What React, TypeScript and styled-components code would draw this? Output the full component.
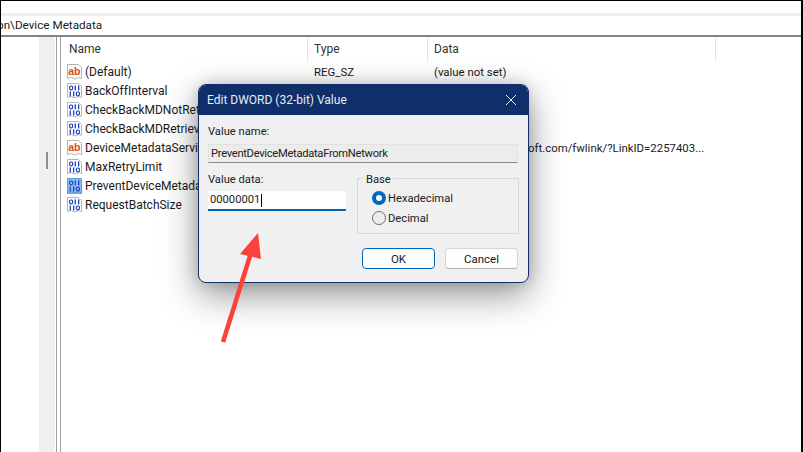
import React from 'react';
import styled, { createGlobalStyle } from 'styled-components';

const Global = createGlobalStyle`
  html, body { margin: 0; padding: 0; background: #fff; }
  * { box-sizing: border-box; }
  body { font-family: Roboto, "Noto Sans", sans-serif; }
`;

const Screen = styled.div`
  position: relative;
  width: 803px;
  height: 452px;
  overflow: hidden;
  background: #fff;
  border-top: 1px solid #000;
  border-left: 1px solid #000;
  border-right: 2px solid #000;
  display: flex;
  flex-direction: column;
  font-size: 12px;
  color: #1a1a1a;
`;
const MenuBar = styled.div`height: 12px; background: #fff;`;
const MenuEdge = styled.div`height: 3px; background: #f0f0f0;`;
const AddressBar = styled.div`
  height: 19px;
  line-height: 19px;
  font-size: 11.7px;
  white-space: nowrap;
  overflow: hidden;
  background: #fff;
`;
const AddressText = styled.span`margin-left: -4px; display: inline-block;`;
const Rule = styled.div`height: 2px; background: #838383;`;
const Body = styled.div`flex: 1; display: flex; min-height: 0;`;
const Tree = styled.div`width: 38px; background: #fff;`;
const TreeScroll = styled.div`
  width: 16px;
  background: #f0f0f0;
  display: flex;
  justify-content: center;
  padding-top: 115px;
`;
const Thumb = styled.div`width: 2px; height: 17px; background: #8f8f8f;`;
const Splitter = styled.div`
  width: 5px;
  margin-left: 1px;
  border-left: 1px solid #a0a0a0;
  border-right: 1px solid #a0a0a0;
  background: #fff;
`;
const List = styled.div`flex: 1; padding-left: 1px; min-width: 0;`;
const Header = styled.div`
  height: 25px;
  display: flex;
  align-items: stretch;
  color: #333;
`;
const HeaderCell = styled.div<{ $w: number; $pad: number }>`
  width: ${p => p.$w}px;
  padding-left: ${p => p.$pad}px;
  line-height: 24px;
  border-right: 1px solid #e5e5e5;
`;
const Row = styled.div`
  height: 19px;
  display: flex;
  align-items: center;
  white-space: nowrap;
`;
const NameCell = styled.div`
  width: 246px;
  display: flex;
  align-items: center;
  gap: 3px;
  padding-left: 5px;
  flex: none;
`;
const NameText = styled.span`
  display: block;
  max-width: 113px;
  overflow: hidden;
`;
const TypeCell = styled.div`width: 120px; padding-left: 6px; flex: none; font-size: 11.4px;`;
const DataCell = styled.div<{ $indent: number }>`
  padding-left: ${p => p.$indent}px;
  font-size: 11.4px;
`;

const Dialog = styled.div`
  position: absolute;
  left: 197px;
  top: 83px;
  width: 331px;
  height: 199px;
  border: 1px solid #0e2f69;
  border-radius: 8px;
  background: #f0f0f0;
  box-shadow: 0 12px 36px rgba(0, 0, 0, 0.42), 0 0 14px rgba(0, 0, 0, 0.16);
  display: flex;
  flex-direction: column;
  overflow: hidden;
  font-size: 11.2px;
`;
const TitleBar = styled.div`
  height: 30px;
  background: #0e2f69;
  color: #e8edf5;
  display: flex;
  align-items: center;
  justify-content: space-between;
  padding: 0 11px 0 8px;
  font-size: 12px;
`;
const DialogBody = styled.div`
  flex: 1;
  padding: 8px 9px 0 9px;
  display: flex;
  flex-direction: column;
`;
const Label = styled.div`line-height: 18px; height: 18px; color: #222;`;
const NameField = styled.div`
  margin-top: 3px;
  height: 19px;
  width: 310px;
  padding-left: 2px;
  line-height: 18px;
  letter-spacing: -0.3px;
  background: #ececec;
  border: 1px solid #e2e2e2;
  border-bottom: 1px solid #8a8a8a;
  color: #222;
`;
const Columns = styled.div`
  margin-top: 7px;
  display: flex;
  gap: 11px;
`;
const ValueColumn = styled.div`width: 138px; padding-top: 1px;`;
const ValueInput = styled.div`
  margin-top: 2px;
  height: 20px;
  background: #fff;
  border-bottom: 2px solid #0067c0;
  padding-left: 2px;
  line-height: 18px;
  display: flex;
  align-items: center;
`;
const Caret = styled.span`
  display: inline-block;
  width: 1px;
  height: 13px;
  margin-left: 1px;
  background: #000;
`;
const BaseGroup = styled.div`
  position: relative;
  width: 162px;
  height: 56px;
  margin-top: 8px;
  border: 1px solid #d9d9d9;
  padding: 11px 0 0 14px;
  display: flex;
  flex-direction: column;
  gap: 4px;
`;
const Legend = styled.span`
  position: absolute;
  left: 6px;
  top: -8px;
  padding: 0 2px;
  line-height: 17px;
  background: #f0f0f0;
  color: #222;
`;
const RadioRow = styled.div`
  display: flex;
  align-items: center;
  gap: 2px;
  height: 16px;
  color: #222;
`;
const Radio = styled.span<{ $on?: boolean }>`
  width: 14px;
  height: 14px;
  border-radius: 50%;
  background: ${p => (p.$on ? '#fff' : '#ececec')};
  border: ${p => (p.$on ? '4px solid #0067c0' : '1px solid #6c6c6c')};
`;
const Buttons = styled.div`
  margin-top: 14px;
  padding-left: 154px;
  display: flex;
  gap: 10px;
`;
const Button = styled.button<{ $primary?: boolean }>`
  width: 73px;
  height: 21px;
  padding: 0;
  border-radius: 4px;
  font: inherit;
  font-size: 11.5px;
  color: #1a1a1a;
  background: #fdfdfd;
  border: 1px solid ${p => (p.$primary ? '#0067c0' : '#d4d4d4')};
  border-bottom-color: ${p => (p.$primary ? '#0067c0' : '#b0b0b0')};
`;
const Arrow = styled.svg`
  position: absolute;
  left: 209px;
  top: 222px;
`;

const FileIcon = ({ selected, children }: { selected?: boolean; children: React.ReactNode }) => (
  <svg width="15" height="16" viewBox="0 0 15 16" style={{ flex: 'none' }}>
    {selected && <rect x="0" y="0" width="15" height="16" fill="#6fb0ea" />}
    <path
      d="M0.5 0.5H11.5L14.5 3.5V14.5L11.5 13.5L8 15L4.5 13.5L0.5 14.5Z"
      fill={selected ? '#8cc0f0' : '#fff'}
      stroke={selected ? '#5a9ad8' : '#b4b4b4'}
    />
    {children}
  </svg>
);
const AbIcon = () => (
  <FileIcon>
    <text x="1.2" y="10.5" fontSize="10.5" fontWeight="700" fontFamily="Liberation Sans, sans-serif" fill="#e0431f">ab</text>
  </FileIcon>
);
const BinIcon = ({ selected }: { selected?: boolean }) => (
  <FileIcon selected={selected}>
    <g fill="none" stroke="#1b43c4" strokeWidth="1.2">
      <rect x="2.6" y="3" width="3" height="3.8" rx="1.2" />
      <rect x="9.4" y="9" width="3" height="3.8" rx="1.2" />
    </g>
    <g fill="#1b43c4">
      <rect x="7.6" y="2.4" width="1.3" height="5" />
      <rect x="11" y="2.4" width="1.3" height="5" />
      <rect x="2.6" y="8.4" width="1.3" height="5" />
      <rect x="6" y="8.4" width="1.3" height="5" />
    </g>
  </FileIcon>
);

const rows = [
  { name: '(Default)', type: 'REG_SZ', data: '(value not set)', indent: 6, str: true },
  { name: 'BackOffInterval' },
  { name: 'CheckBackMDNotRetrieved' },
  { name: 'CheckBackMDRetrieved' },
  { name: 'DeviceMetadataServiceURL', data: 'oft.com/fwlink/?LinkID=2257403...', indent: 220, str: true },
  { name: 'MaxRetryLimit' },
  { name: 'PreventDeviceMetadataFromNetwork', selected: true },
  { name: 'RequestBatchSize' },
];

export default function App() {
  return (
    <Screen>
      <Global />
      <MenuBar />
      <MenuEdge />
      <AddressBar><AddressText>on\Device Metadata</AddressText></AddressBar>
      <Rule />
      <Body>
        <Tree />
        <TreeScroll><Thumb /></TreeScroll>
        <Splitter />
        <List>
          <Header>
            <HeaderCell $w={246} $pad={7}>Name</HeaderCell>
            <HeaderCell $w={120} $pad={6}>Type</HeaderCell>
            <HeaderCell $w={288} $pad={6}>Data</HeaderCell>
          </Header>
          {rows.map(r => (
            <Row key={r.name}>
              <NameCell>
                {r.str ? <AbIcon /> : <BinIcon selected={r.selected} />}
                <NameText>{r.name}</NameText>
              </NameCell>
              {r.type ? <TypeCell>{r.type}</TypeCell> : null}
              {r.data ? <DataCell $indent={r.indent ?? 6}>{r.data}</DataCell> : null}
            </Row>
          ))}
        </List>
      </Body>
      <Dialog>
        <TitleBar>
          <span>Edit DWORD (32-bit) Value</span>
          <svg width="12" height="12" viewBox="0 0 12 12" stroke="#e8edf5" strokeWidth="1">
            <path d="M1 1L11 11M11 1L1 11" />
          </svg>
        </TitleBar>
        <DialogBody>
          <Label>Value name:</Label>
          <NameField>PreventDeviceMetadataFromNetwork</NameField>
          <Columns>
            <ValueColumn>
              <Label>Value data:</Label>
              <ValueInput>00000001<Caret /></ValueInput>
            </ValueColumn>
            <BaseGroup>
              <Legend>Base</Legend>
              <RadioRow><Radio $on />Hexadecimal</RadioRow>
              <RadioRow><Radio />Decimal</RadioRow>
            </BaseGroup>
          </Columns>
          <Buttons>
            <Button $primary>OK</Button>
            <Button>Cancel</Button>
          </Buttons>
        </DialogBody>
      </Dialog>
      <Arrow width="60" height="125" viewBox="209 222 60 125">
        <path d="M222 341L249 255" stroke="#f9423a" strokeWidth="4.5" fill="none" />
        <path d="M257 232L239 253L260 258Z" fill="#f9423a" />
      </Arrow>
    </Screen>
  );
}
